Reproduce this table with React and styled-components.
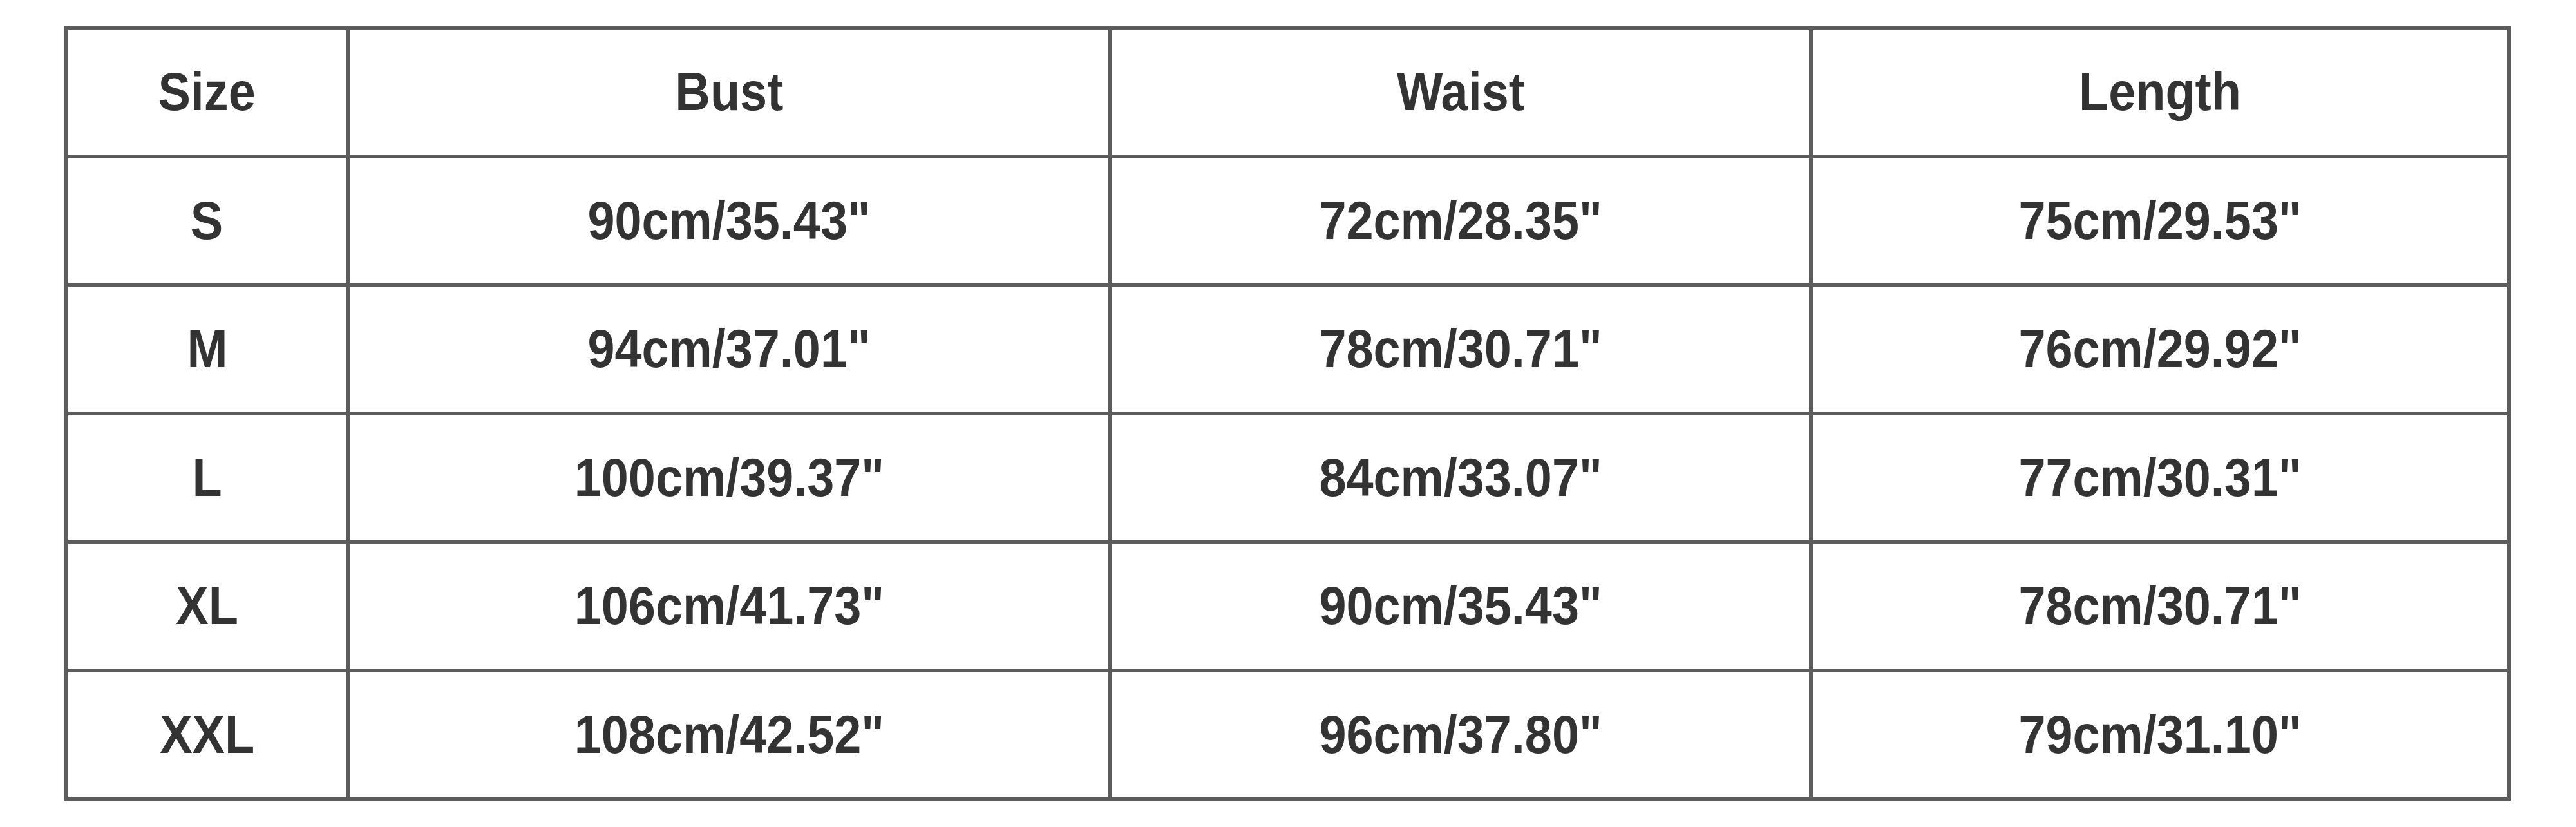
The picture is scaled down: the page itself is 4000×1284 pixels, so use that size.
import React from "react";
import styled, { createGlobalStyle } from "styled-components";

const GlobalStyle = createGlobalStyle`
  body {
    margin: 0;
    background: #ffffff;
  }
`;

const headers = ["Size", "Bust", "Waist", "Length"];

const rows = [
  ["S", "90cm/35.43''", "72cm/28.35''", "75cm/29.53''"],
  ["M", "94cm/37.01''", "78cm/30.71''", "76cm/29.92''"],
  ["L", "100cm/39.37''", "84cm/33.07''", "77cm/30.31''"],
  ["XL", "106cm/41.73''", "90cm/35.43''", "78cm/30.71''"],
  ["XXL", "108cm/42.52''", "96cm/37.80''", "79cm/31.10''"],
];

function SizeChart() {
  return (
    <Page>
      <GlobalStyle />
      <Chart>
        {headers.map((h) => (
          <Cell key={h}>
            <Label>{h}</Label>
          </Cell>
        ))}
        {rows.map((row) =>
          row.map((value, i) => (
            <Cell key={row[0] + i}>
              <Label>{value.replace(/''/g, '"')}</Label>
            </Cell>
          ))
        )}
      </Chart>
    </Page>
  );
}

const Page = styled.div`
  width: 4000px;
  height: 1284px;
  padding: 40px 0 0 100px;
  box-sizing: border-box;
  background: #fff;
`;

const Chart = styled.div`
  display: grid;
  grid-template-columns: 437px 1184px 1088px 1084px;
  grid-template-rows: repeat(6, 199.5px);
  width: 3799px;
  box-sizing: border-box;
  border-top: 6px solid #5c5c5c;
  border-left: 6px solid #5c5c5c;
`;

const Cell = styled.div`
  display: flex;
  align-items: center;
  justify-content: center;
  border-right: 6px solid #5c5c5c;
  border-bottom: 6px solid #5c5c5c;
`;

// glyphs in the chart are a touch narrower than plain Arial bold
const Label = styled.span`
  display: inline-block;
  transform: scaleX(0.9);
  font-family: "Liberation Sans", Arial, sans-serif;
  font-weight: 700;
  font-size: 84px;
  color: #333333;
  white-space: nowrap;
`;

export default SizeChart;
